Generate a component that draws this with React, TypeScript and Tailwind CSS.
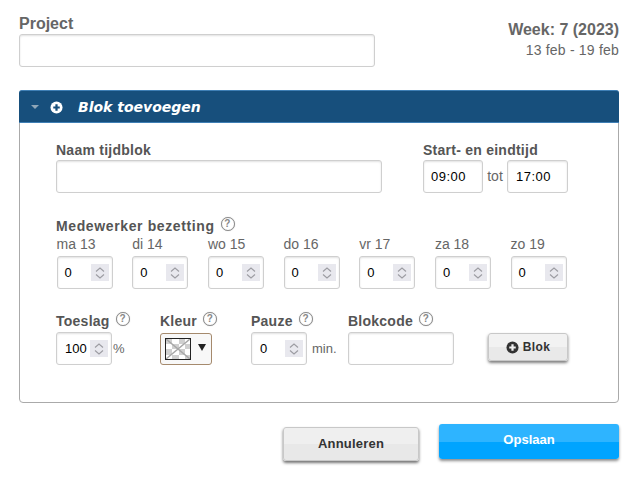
import React from 'react';

const FONT = 'font-["Liberation_Sans",Arial,sans-serif]';
const INPUT_BOX = 'h-[33px] rounded-[3px] border border-[#cfcfcf] bg-white shadow-[inset_0_1px_2px_rgba(0,0,0,0.12)]';

const DAYS = ['ma 13', 'di 14', 'wo 15', 'do 16', 'vr 17', 'za 18', 'zo 19'];

const Help = () => (
  <span className="inline-flex h-[14px] w-[14px] items-center justify-center rounded-full border border-[#8a8a8a] bg-white text-[10px] leading-none text-[#888] shadow-[0_0_1px_rgba(0,0,0,0.3)]">
    ?
  </span>
);

const PlusIcon = ({ className, fill, hole }: { className: string; fill: string; hole: string }) => (
  <svg viewBox="0 0 14 14" className={className}>
    <circle cx="7" cy="7" r="6.5" fill={fill} />
    <path d="M7 3.5v7M3.5 7h7" stroke={hole} strokeWidth="2.4" />
  </svg>
);

const Spinner = () => (
  <span className="flex h-[17px] w-[18px] flex-col items-center justify-center gap-[2px] bg-[#e8e8ee]">
    <svg viewBox="0 0 10 5" className="h-[5px] w-[10px]">
      <path d="M1 4.5 5 1l4 3.5" fill="none" stroke="#9c9ca2" strokeWidth="1.1" />
    </svg>
    <svg viewBox="0 0 10 5" className="h-[5px] w-[10px]">
      <path d="M1 .5 5 4l4-3.5" fill="none" stroke="#9c9ca2" strokeWidth="1.1" />
    </svg>
  </span>
);

const NumberBox = ({ value, width, pad }: { value: string; width: string; pad: string }) => (
  <div className={`flex items-center justify-between ${INPUT_BOX} ${width} ${pad} pr-[3px] text-[13px] text-black`}>
    <span>{value}</span>
    <Spinner />
  </div>
);

const Label = ({ children, help, tracking = 'tracking-[0.25px]' }: { children: React.ReactNode; help?: boolean; tracking?: string }) => (
  <div className={`flex h-[18px] items-center gap-[6px] text-[14px] font-bold text-[#555] ${tracking}`}>
    <span>{children}</span>
    {help && <span className="-mt-[5px] flex"><Help /></span>}
  </div>
);

export default function App() {
  return (
    <div className={`h-[485px] w-[633px] overflow-hidden bg-white pl-[19px] pr-[14px] pt-[14px] ${FONT}`}>
      <div className="flex items-start justify-between">
        <div>
          <div className="h-[20px] text-[16px] font-bold leading-[20px] text-[#666]">Project</div>
          <div className={`w-[356px] ${INPUT_BOX}`} />
        </div>
        <div className="pt-[7px] text-right">
          <div className="text-[16px] font-bold leading-[18px] text-[#666]">Week: 7 (2023)</div>
          <div className="mt-[2px] text-[14px] leading-[18px] tracking-[0.2px] text-[#666]">13 feb - 19 feb</div>
        </div>
      </div>

      <div className="mt-[23px] h-[313px] w-[600px] rounded-[4px] border border-[#aaa]">
        <div className="-mx-px -mt-px flex h-[33px] items-center rounded-t-[3px] border-y border-[#3f7fb5] bg-[#174f7c] pl-[12px] pt-px">
          <span className="h-0 w-0 border-x-[4px] border-t-[4px] border-x-transparent border-t-[#8fa6b8]" />
          <PlusIcon className="ml-[11px] h-[13px] w-[13px]" fill="#fff" hole="#174f7c" />
          <span className="ml-[15px] font-['DejaVu_Sans',sans-serif] text-[14px] font-bold italic text-white">Blok toevoegen</span>
        </div>

        <div className="pl-[36px] pt-[18px]">
          <div className="flex">
            <div>
              <Label>Naam tijdblok</Label>
              <div className={`mt-px w-[326px] ${INPUT_BOX}`} />
            </div>
            <div className="ml-[41px]">
              <Label>Start- en eindtijd</Label>
              <div className="mt-px flex items-center text-[13px]">
                <div className={`flex w-[60px] items-center pl-[7px] tracking-[0.5px] text-black ${INPUT_BOX}`}>09:00</div>
                <span className="w-[24px] text-center text-[14px] text-[#666]">tot</span>
                <div className={`flex w-[61px] items-center pl-[8px] tracking-[0.5px] text-black ${INPUT_BOX}`}>17:00</div>
              </div>
            </div>
          </div>

          <div className="mt-[24px]">
            <Label help tracking="tracking-[0.62px]">Medewerker bezetting</Label>
            <div className="ml-[0.6px] flex gap-[19.67px]">
              {DAYS.map((day) => (
                <div key={day} className="w-[56px]">
                  <div className="h-[21px] text-[14px] leading-[19px] text-[#666]">{day}</div>
                  <NumberBox value="0" width="w-[56px]" pad="pl-[7px]" />
                </div>
              ))}
            </div>
          </div>

          <div className="mt-[23px] flex items-start">
            <div className="w-[104px]">
              <Label help>Toeslag</Label>
              <div className="mt-[2px] flex items-center">
                <NumberBox value="100" width="w-[56px]" pad="pl-[8px]" />
                <span className="ml-px text-[13px] text-[#666]">%</span>
              </div>
            </div>
            <div className="w-[91px]">
              <Label help>Kleur</Label>
              <div className="mt-[3px] flex h-[32px] w-[52px] items-center rounded-[3px] border border-[#a58a6d] bg-[#f8f8f8] pl-[4px]">
                <svg viewBox="0 0 26 22" className="h-[22px] w-[26px]">
                  <rect width="26" height="22" fill="#fff" />
                  <path d="M0 0h7v6H0zM14 0h6v6h-6zM7 6h7v5H7zM20 6h6v5h-6zM0 11h7v6H0zM14 11h6v6h-6zM7 17h7v5H7zM20 17h6v5h-6z" fill="#d0d0d0" />
                  <path d="M1 1l24 20M25 1 1 21" stroke="#a8a8a8" strokeWidth="1.6" />
                  <rect x=".5" y=".5" width="25" height="21" fill="none" stroke="#222" />
                </svg>
                <span className="mb-[4px] ml-[7px] h-0 w-0 border-x-[4px] border-t-[7px] border-x-transparent border-t-[#222]" />
              </div>
            </div>
            <div className="w-[97px]">
              <Label help>Pauze</Label>
              <div className="mt-[2px] flex items-center">
                <NumberBox value="0" width="w-[56px]" pad="pl-[8px]" />
                <span className="ml-[5px] text-[13px] text-[#666]">min.</span>
              </div>
            </div>
            <div className="w-[140px]">
              <Label help>Blokcode</Label>
              <div className={`mt-[2px] w-[106px] ${INPUT_BOX}`} />
            </div>
            <button className="mt-[21px] flex h-[28px] w-[80px] items-center justify-center gap-[4px] rounded-[3px] border border-[#c8c8c8] bg-[linear-gradient(#f2f2f2_50%,#e9e9e9_50%)] text-[12px] font-bold tracking-[0.4px] text-[#333] shadow-[0_2px_3px_rgba(0,0,0,0.5)]">
              <PlusIcon className="h-[13px] w-[13px]" fill="#333" hole="#efefef" />
              Blok
            </button>
          </div>
        </div>
      </div>

      <div className="mt-[21px] flex items-start justify-end gap-[20px]">
        <button className="mt-[3px] h-[34px] w-[136px] rounded-[3px] border border-[#c8c8c8] bg-[linear-gradient(#efefef_50%,#e8e8e8_50%)] text-[13px] font-bold tracking-[0.2px] text-[#333] shadow-[0_2px_3px_rgba(0,0,0,0.55)]">
          Annuleren
        </button>
        <button className="h-[35px] w-[180px] rounded-[3px] bg-[linear-gradient(#2eb4ff_50%,#00a4ff_50%)] pb-[3px] text-[13px] font-bold text-white shadow-[0_2px_3px_rgba(0,0,0,0.45)]">
          Opslaan
        </button>
      </div>
    </div>
  );
}
